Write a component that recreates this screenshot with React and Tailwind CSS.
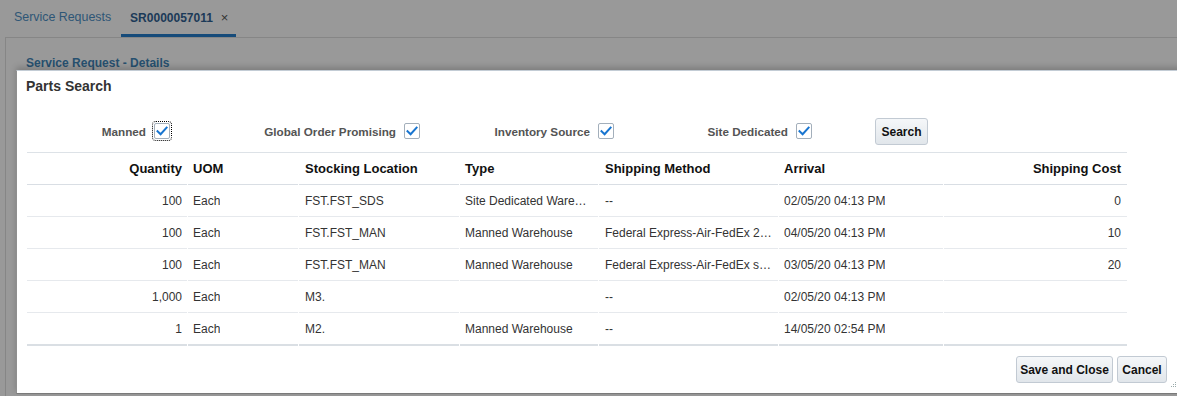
import React from 'react';

const COLS = 'grid grid-cols-[160px_110px_160px_138px_179px_164px_183px] gap-x-px';

const rows = [
  { qty: '100', uom: 'Each', loc: 'FST.FST_SDS', type: 'Site Dedicated Warehouse', ship: '--', arrival: '02/05/20 04:13 PM', cost: '0' },
  { qty: '100', uom: 'Each', loc: 'FST.FST_MAN', type: 'Manned Warehouse', ship: 'Federal Express-Air-FedEx 2Day', arrival: '04/05/20 04:13 PM', cost: '10' },
  { qty: '100', uom: 'Each', loc: 'FST.FST_MAN', type: 'Manned Warehouse', ship: 'Federal Express-Air-FedEx standard overnight', arrival: '03/05/20 04:13 PM', cost: '20' },
  { qty: '1,000', uom: 'Each', loc: 'M3.', type: '', ship: '--', arrival: '02/05/20 04:13 PM', cost: '' },
  { qty: '1', uom: 'Each', loc: 'M2.', type: 'Manned Warehouse', ship: '--', arrival: '14/05/20 02:54 PM', cost: '' },
];

function Checkbox({ focused }) {
  return (
    <span
      className={`ml-2 flex h-4 w-4 items-center justify-center rounded-[2px] border border-[#a3afbb] bg-white ${
        focused ? 'outline-1 outline-offset-1 outline-dotted outline-black' : ''
      }`}
    >
      <svg width="12" height="12" viewBox="0 0 12 12" fill="none">
        <path d="M1.5 6.2 L4.6 9.2 L10.6 2.6" stroke="#1875d0" strokeWidth="2" strokeLinecap="square" />
      </svg>
    </span>
  );
}

function Filter({ label, width, focused }) {
  return (
    <div className={`flex items-center justify-end ${width}`}>
      <span className="text-[11.7px] font-bold text-[#545454]">{label}</span>
      <Checkbox focused={focused} />
    </div>
  );
}

function Button({ children, className = '' }) {
  return (
    <button
      className={`h-[27px] whitespace-nowrap rounded-[3px] border border-[#c2cad3] bg-gradient-to-b from-[#f5f7f9] to-[#e1e6eb] px-0 text-[12px] font-bold text-[#111] ${className}`}
    >
      {children}
    </button>
  );
}

export default function App() {
  return (
    <div className="relative h-[396px] w-[1177px] overflow-hidden bg-[#999999] font-['Liberation_Sans',Arial,sans-serif]">
      {/* dimmed page behind the dialog */}
      <div className="flex h-[37px] items-end pl-[14px]">
        <div className="flex h-full items-center pb-[2px] text-[12.4px] text-[#2e5676]">Service Requests</div>
        <div className="ml-[10px] flex h-full items-center gap-[8px] border-b-[3px] border-[#164b7a] pl-[9px] pr-[8px] pt-[1px]">
          <span className="text-[12px] font-bold text-[#1b3a58]">SR0000057011</span>
          <span className="text-[13px] text-[#333]">×</span>
        </div>
      </div>
      <div className="ml-[5px] h-[400px] border-l border-t border-[#868686] pl-[20px] pt-[18px]">
        <div className="text-[12px] leading-[14px] font-bold text-[#27506f]">Service Request - Details</div>
      </div>

      {/* dialog */}
      <div className="absolute left-[16px] top-[70px] h-[324px] w-[1170px] border-l border-t border-b border-l-[#8f8f8f] border-t-[#c3ccd5] border-b-[#7a7a7a] bg-white shadow-[0_-3px_6px_rgba(0,0,0,0.18)]">
        <div className="flex h-[31px] items-center pl-[9px] text-[14px] font-bold text-[#333]">Parts Search</div>

        <div className="mt-[16px] flex h-[27px] items-center">
          <Filter label="Manned" width="w-[153px]" focused />
          <Filter label="Global Order Promising" width="w-[250px]" />
          <Filter label="Inventory Source" width="w-[194px]" />
          <Filter label="Site Dedicated" width="w-[198px]" />
          <Button className="ml-[63px] w-[53px]">Search</Button>
        </div>

        <div className="ml-[10px] mt-[7px] w-[1100px]">
          <div className={`${COLS} h-[33px] border-t border-[#dde2e7] text-[13px] font-bold text-[#111]`}>
            {[
              ['Quantity', 'justify-end pr-[5px]'],
              ['UOM', 'pl-[5px]'],
              ['Stocking Location', 'pl-[6px]'],
              ['Type', 'pl-[5px]'],
              ['Shipping Method', 'pl-[6px]'],
              ['Arrival', 'pl-[5px]'],
              ['Shipping Cost', 'justify-end pr-[6px]'],
            ].map(([h, c]) => (
              <div key={h} className={`flex items-center border-b border-[#d9dee4] ${c}`}>{h}</div>
            ))}
          </div>
          {rows.map((r, i) => (
            <div key={i} className={`${COLS} text-[12px] text-[#333]`}>
              {[
                [r.qty, 'justify-end pr-[5px]'],
                [r.uom, 'pl-[5px]'],
                [r.loc, 'pl-[6px]'],
                [r.type, 'px-[5px]'],
                [r.ship, 'px-[6px]'],
                [r.arrival, 'pl-[5px]'],
                [r.cost, 'justify-end pr-[6px]'],
              ].map(([v, c], j) => (
                <div
                  key={j}
                  className={`flex min-w-0 items-center ${
                    i === rows.length - 1 ? 'h-[33px] border-b-2 border-[#dadfe4]' : 'h-[32px] border-b border-[#e6e9ed]'
                  } ${c}`}
                >
                  <span className="truncate">{v}</span>
                </div>
              ))}
            </div>
          ))}
        </div>

        <div className="mt-[10px] flex justify-end gap-[4px] pr-[11px]" style={{ width: 1161 }}>
          <Button className="w-[97px]">Save and Close</Button>
          <Button className="w-[50px]">Cancel</Button>
        </div>

        <svg className="absolute left-[1154px] top-[311px]" width="6" height="6" viewBox="0 0 6 6">
          <rect x="4" y="0" width="1" height="1" fill="#9aa" />
          <rect x="2" y="2" width="1" height="1" fill="#9aa" />
          <rect x="4" y="2" width="1" height="1" fill="#9aa" />
          <rect x="0" y="4" width="1" height="1" fill="#9aa" />
          <rect x="2" y="4" width="1" height="1" fill="#9aa" />
          <rect x="4" y="4" width="1" height="1" fill="#9aa" />
        </svg>
      </div>
    </div>
  );
}
